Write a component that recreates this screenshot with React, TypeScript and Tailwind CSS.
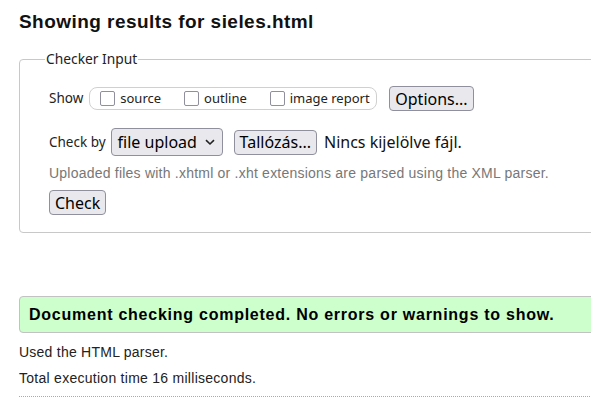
import { useState } from "react";

const ui = "font-['Segoe_UI','Noto_Sans','Open_Sans',sans-serif]";
const arial = "font-['Liberation_Sans',Arial,sans-serif]";
const button =
  "h-[25px] px-[5px] rounded-[4px] border border-[#8f8f9d] bg-[#e9e9ed] text-[16px] leading-none text-black " +
  ui;

function Box({ label }: { label: string }) {
  const [on, setOn] = useState(false);
  return (
    <label className="flex items-center gap-[5px] cursor-pointer">
      <span
        onClick={() => setOn(!on)}
        className={`w-[15px] h-[15px] rounded-[2px] border border-[#8f8f9d] ${on ? "bg-[#0060df]" : "bg-white"}`}
      />
      <span className="text-[13px] text-[#222]">{label}</span>
    </label>
  );
}

export default function App() {
  return (
    <div className={`w-[591px] h-[405px] overflow-hidden bg-white text-black ${arial}`}>
      <div className="pl-[19px] w-[700px]">
        <h1 className="mt-[10px] text-[19px] tracking-[0.45px] leading-[24px] font-bold text-[#111]">
          Showing results for sieles.html
        </h1>

        <fieldset className="mt-[16px] border border-[#c8c8c8] rounded-[4px] px-[29px] pb-[17px]">
          <legend className={`-ml-[4px] px-[1px] text-[13.8px] leading-[18px] text-[#222] ${ui}`}>
            Checker Input
          </legend>

          <div className={`mt-[17px] h-[27px] flex items-center ${ui}`}>
            <span className="text-[13.5px] text-[#222] mr-[6px]">Show</span>
            <div className="w-[288px] h-[23px] rounded-[8px] border border-[#d0d0d0] flex items-center pl-[10px] gap-[23px]">
              <Box label="source" />
              <Box label="outline" />
              <Box label="image report" />
            </div>
            <button className={`${button} ml-[12px]`}>Options...</button>
          </div>

          <div className={`mt-[16px] h-[28px] flex items-center ${ui}`}>
            <span className="text-[13.5px] text-[#222] mr-[5px]">Check by</span>
            <div className="w-[112px] h-[28px] rounded-[4px] border border-[#8f8f9d] bg-[#e9e9ed] flex items-center justify-between pl-[6px] pr-[7px]">
              <span className="text-[16px] leading-none">file upload</span>
              <svg width="10" height="7" viewBox="0 0 10 7" fill="none" stroke="#222" strokeWidth="1.6">
                <path d="M1 1.2 L5 5 L9 1.2" />
              </svg>
            </div>
            <button className={`${button} ml-[11px]`}>Tallózás...</button>
            <span className="ml-[7px] text-[16px] text-[#111]">Nincs kijelölve fájl.</span>
          </div>

          <p className="mt-[9px] text-[14px] tracking-[0.22px] leading-[16px] text-[#777]">
            Uploaded files with .xhtml or .xht extensions are parsed using the XML parser.
          </p>

          <button className={`${button} mt-[9px] block`}>Check</button>
        </fieldset>

        <div className="mt-[63px] h-[37px] border border-[#c2c2c2] rounded-[4px] bg-[#ccffcc] flex items-center pl-[9px]">
          <span className="text-[16px] tracking-[0.75px] font-bold">
            Document checking completed. No errors or warnings to show.
          </span>
        </div>

        <p className="mt-[10px] text-[14px] tracking-[0.24px] leading-[18px] text-[#222]">
          Used the HTML parser.
        </p>
        <p className="mt-[8px] text-[14px] tracking-[0.27px] leading-[18px] text-[#222]">
          Total execution time 16 milliseconds.
        </p>
        <div className="mt-[9px] border-t border-dotted border-[#aaa]" />
      </div>
    </div>
  );
}
